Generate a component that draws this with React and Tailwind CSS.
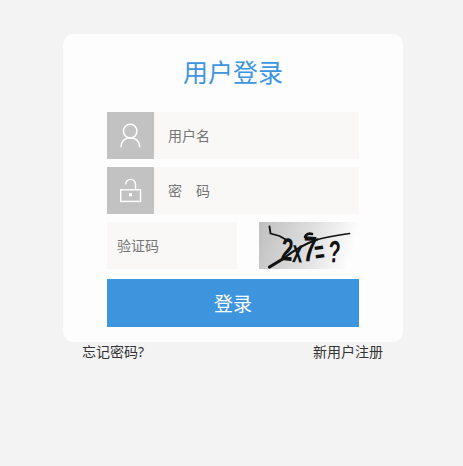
import React, { useState } from "react";

const UserIcon = () => (
  <svg width="47" height="47" viewBox="0 0 47 47" fill="none" stroke="#fff" strokeWidth="1.5">
    <circle cx="23.2" cy="19.1" r="6.8" />
    <path d="M14 35.2v-1.3a9.3 8.2 0 0 1 18.6 0v1.3" />
  </svg>
);

const LockIcon = () => (
  <svg width="47" height="47" viewBox="0 0 47 47" fill="none" stroke="#fff" strokeWidth="1.4">
    <rect x="13.7" y="22.8" width="19.8" height="11.6" />
    <path d="M18.7 17.6v-.4a4.9 4.8 0 0 1 9.8 0v5.6" />
    <rect x="22" y="26.2" width="3" height="3" fill="#fff" stroke="none" />
  </svg>
);

const Captcha = () => (
  <svg
    width="100"
    height="47"
    viewBox="0 0 100 47"
    className="cursor-pointer overflow-visible font-['Liberation_Sans',sans-serif] font-bold"
  >
    <defs>
      <linearGradient id="captcha-bg" x1="0" y1="0" x2="1" y2="0.15">
        <stop offset="0" stopColor="#bfbfbf" />
        <stop offset="0.5" stopColor="#dcdcdc" />
        <stop offset="1" stopColor="#fdfdfd" />
      </linearGradient>
    </defs>
    <rect width="100" height="47" fill="url(#captcha-bg)" />
    <g fill="#111">
      <text transform="translate(21.500 38) rotate(5) scale(.66 1)" fontSize="32">2</text>
      <text transform="translate(33 40) rotate(3) scale(.9 1.6)" fontSize="20">x</text>
      <text transform="translate(43.500 39) rotate(3) scale(.68 1)" fontSize="36">7</text>
      <text transform="translate(57 41) rotate(-8) scale(.8 1.5)" fontSize="21">=</text>
      <text transform="translate(69 40) rotate(3) scale(.7 1.1)" fontSize="28">?</text>
    </g>
    <g fill="none" stroke="#111" strokeLinecap="round" strokeLinejoin="round">
      <path d="M10.5 4.5l1 7 9 2.500 7 4" strokeWidth="1.8" />
      <path d="M10.5 45l14-8.500" strokeWidth="3.2" />
      <path d="M24.500 36.500c10-8 22-15 34-19" strokeWidth="2.2" />
      <path d="M58.500 17.500c10-2.500 19-4 32-6" strokeWidth="1.7" />
      <path d="M46 15c1-3 4-4 7-3" strokeWidth="2.6" />
    </g>
  </svg>
);

const inputClass =
  "h-[47px] min-w-0 bg-[#f9f8f7] text-sm text-[#555] outline-none placeholder:text-[#757575]";

export default function App() {
  const [form, setForm] = useState({ username: "", password: "", code: "" });

  const handleChange = (e) => {
    setForm({ ...form, [e.target.name]: e.target.value });
  };

  return (
    <div className="min-h-screen bg-[#f3f3f3] pl-[63px] pt-[34px] font-['Noto_Sans','Noto_Sans_CJK_SC',sans-serif]">
      <form
        onSubmit={(e) => e.preventDefault()}
        className="h-[308px] w-[340px] rounded-[10px] bg-[#fdfdfd] px-11"
      >
        <h1 className="h-[78px] pt-[19px] text-center text-[25px] leading-[38px] text-[#3d95de]">
          用户登录
        </h1>

        <div className="flex flex-col gap-2">
          <div className="flex">
            <span className="h-[47px] w-[47px] shrink-0 bg-[#c2c2c2]">
              <UserIcon />
            </span>
            <input
              name="username"
              value={form.username}
              onChange={handleChange}
              placeholder="用户名"
              className={`${inputClass} flex-1 pl-3.5`}
            />
          </div>

          <div className="flex">
            <span className="h-[47px] w-[47px] shrink-0 bg-[#c2c2c2]">
              <LockIcon />
            </span>
            <input
              type="password"
              name="password"
              value={form.password}
              onChange={handleChange}
              placeholder="密　码"
              className={`${inputClass} flex-1 pl-3.5`}
            />
          </div>

          <div className="flex justify-between">
            <input
              name="code"
              value={form.code}
              onChange={handleChange}
              placeholder="验证码"
              className={`${inputClass} w-[130px] pl-2.5`}
            />
            <Captcha />
          </div>
        </div>

        <button
          type="submit"
          className="mt-2.5 h-12 w-full cursor-pointer bg-[#3d95de] pt-0.5 text-[19px] text-white"
        >
          登录
        </button>
      </form>

      <div className="flex w-[340px] justify-between pl-[19px] pr-5 text-sm leading-5 text-[#333]">
        <a href="#forgot">忘记密码?</a>
        <a href="#register">新用户注册</a>
      </div>
    </div>
  );
}
